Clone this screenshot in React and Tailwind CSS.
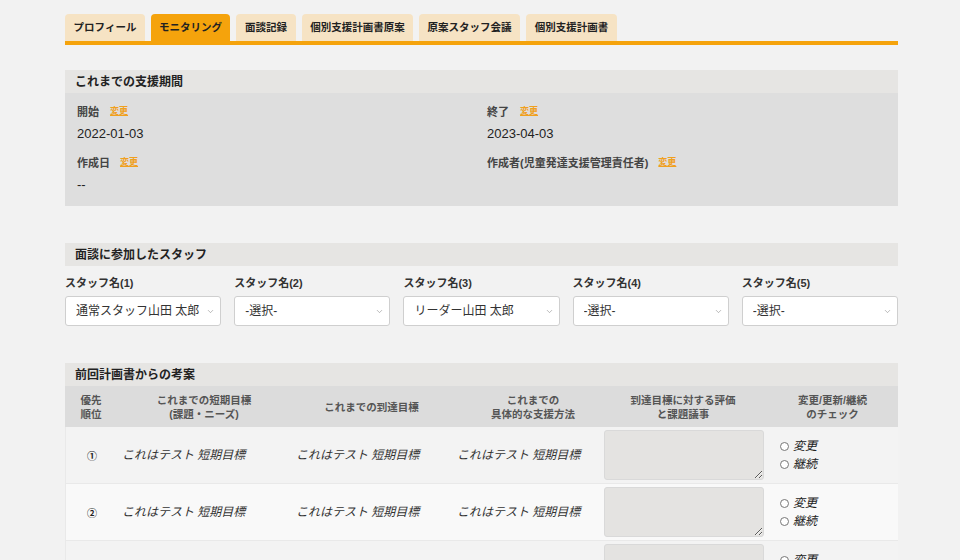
import { ChevronDown } from "lucide-react";

const tabs = [
    { name: "プロフィール", w: "w-[80px]" },
    { name: "モニタリング", w: "w-[79px]" },
    { name: "面談記録", w: "w-[60px]" },
    { name: "個別支援計画書原案", w: "w-[111px]" },
    { name: "原案スタッフ会議", w: "w-[101px]" },
    { name: "個別支援計画書", w: "w-[91px]" },
];

const staff = [
    { label: "スタッフ名(1)", value: "通常スタッフ山田 太郎" },
    { label: "スタッフ名(2)", value: "-選択-" },
    { label: "スタッフ名(3)", value: "リーダー山田 太郎" },
    { label: "スタッフ名(4)", value: "-選択-" },
    { label: "スタッフ名(5)", value: "-選択-" },
];

const rows = ["①", "②", "③"];

function ChangeLink({ className = "" }) {
    return (
        <a href="#" className={`text-[9px] font-bold text-[#f0a01e] underline underline-offset-1 ${className}`}>
            変更
        </a>
    );
}

function SectionHeader({ children }) {
    return (
        <div className="flex h-[23px] items-center bg-[#e6e5e3] px-[10px] text-[12px] font-bold text-[#222]">
            {children}
        </div>
    );
}

function Radio({ label }) {
    return (
        <label className="flex h-[18px] items-center gap-[4px] text-[12px] italic text-[#222]">
            <span className="h-[9px] w-[9px] rounded-full border border-[#777] bg-white" />
            {label}
        </label>
    );
}

export default function App() {
    return (
        <div className="min-h-screen bg-[#f2f2f2] font-['Liberation_Sans','Noto_Sans_CJK_JP',sans-serif] text-[#333]">
            <div className="ml-[65px] w-[833px] pt-[14px] pb-10">
                {/* Tabs */}
                <div className="flex gap-[6px]">
                    {tabs.map((t, i) => (
                        <div
                            key={t.name}
                            className={`flex h-[27px] items-center justify-center rounded-t-[4px] text-[10.5px] font-bold text-[#222] ${t.w} ${
                                i === 1 ? "bg-[#f5a30c]" : "bg-[#f6e3c4]"
                            }`}
                        >
                            {t.name}
                        </div>
                    ))}
                </div>
                <div className="h-[4px] bg-[#f5a30c]" />

                {/* Support period */}
                <section className="mt-[25px]">
                    <SectionHeader>これまでの支援期間</SectionHeader>
                    <div className="grid h-[113px] grid-cols-[410px_1fr] bg-[#dedede] px-3 pt-[11px]">
                        <div>
                            <div className="flex h-4 items-center text-[11px] font-bold text-[#444]">
                                開始<ChangeLink className="ml-[11px]" />
                            </div>
                            <div className="mt-[5px] h-[18px] text-[13px] leading-[18px] text-[#222]">2022-01-03</div>
                            <div className="mt-[12px] flex h-4 items-center text-[11px] font-bold text-[#444]">
                                作成日<ChangeLink className="ml-[10px]" />
                            </div>
                            <div className="mt-[5px] h-[18px] text-[13px] leading-[18px] text-[#222]">--</div>
                        </div>
                        <div>
                            <div className="flex h-4 items-center text-[11px] font-bold text-[#444]">
                                終了<ChangeLink className="ml-[11px]" />
                            </div>
                            <div className="mt-[5px] h-[18px] text-[13px] leading-[18px] text-[#222]">2023-04-03</div>
                            <div className="mt-[12px] flex h-4 items-center text-[11px] font-bold text-[#444]">
                                作成者(児童発達支援管理責任者)<ChangeLink className="ml-[10px]" />
                            </div>
                        </div>
                    </div>
                </section>

                {/* Staff */}
                <section className="mt-[37px]">
                    <SectionHeader>面談に参加したスタッフ</SectionHeader>
                    <div className="mt-[9px] grid grid-cols-5 gap-x-[13px]">
                        {staff.map((s) => (
                            <div key={s.label}>
                                <div className="flex h-4 items-center text-[11px] font-bold text-[#333]">{s.label}</div>
                                <div className="relative mt-[5px]">
                                    <select
                                        defaultValue={s.value}
                                        className="h-[30px] w-full appearance-none rounded-[3px] border border-[#cfcfcf] bg-white pl-[10px] text-[12px] text-[#333] outline-none"
                                    >
                                        <option>{s.value}</option>
                                    </select>
                                    <ChevronDown size={9} strokeWidth={1.5} className="pointer-events-none absolute right-[6px] top-[11px] text-[#888]" />
                                </div>
                            </div>
                        ))}
                    </div>
                </section>

                {/* Previous plan review */}
                <section className="mt-[37px]">
                    <SectionHeader>前回計画書からの考案</SectionHeader>
                    <div className="grid h-[41px] grid-cols-[52px_174px_161px_147px_168px_131px] items-center bg-[#dcdcdc] text-center text-[10.5px] font-bold leading-[14px] text-[#555]">
                        <div>優先<br />順位</div>
                        <div>これまでの短期目標<br />(課題・ニーズ)</div>
                        <div>これまでの到達目標</div>
                        <div className="pl-[15px]">これまでの<br />具体的な支援方法</div>
                        <div>到達目標に対する評価<br />と課題議事</div>
                        <div>変更/更新/継続<br />のチェック</div>
                    </div>
                    {rows.map((n, i) => (
                        <div
                            key={n}
                            className={`grid h-[57px] grid-cols-[52px_174px_161px_147px_168px_131px] items-center border-b border-l border-[#e9e9e9] text-[12px] italic text-[#333] ${
                                i % 2 === 0 ? "bg-[#f3f3f3]" : "bg-[#f9f9f9]"
                            }`}
                        >
                            <div className="text-center font-['Noto_Sans_CJK_JP',sans-serif] text-[10px] font-bold not-italic text-[#222]">{n}</div>
                            <div className="pl-1">これはテスト 短期目標</div>
                            <div className="pl-1">これはテスト 短期目標</div>
                            <div className="pl-1">これはテスト 短期目標</div>
                            <div className="px-1">
                                <textarea className="block h-[50px] w-full rounded-[3px] border border-[#d9d9d9] bg-[#e4e3e1] outline-none" />
                            </div>
                            <div className="pl-3">
                                <Radio label="変更" />
                                <Radio label="継続" />
                            </div>
                        </div>
                    ))}
                </section>
            </div>
        </div>
    );
}
